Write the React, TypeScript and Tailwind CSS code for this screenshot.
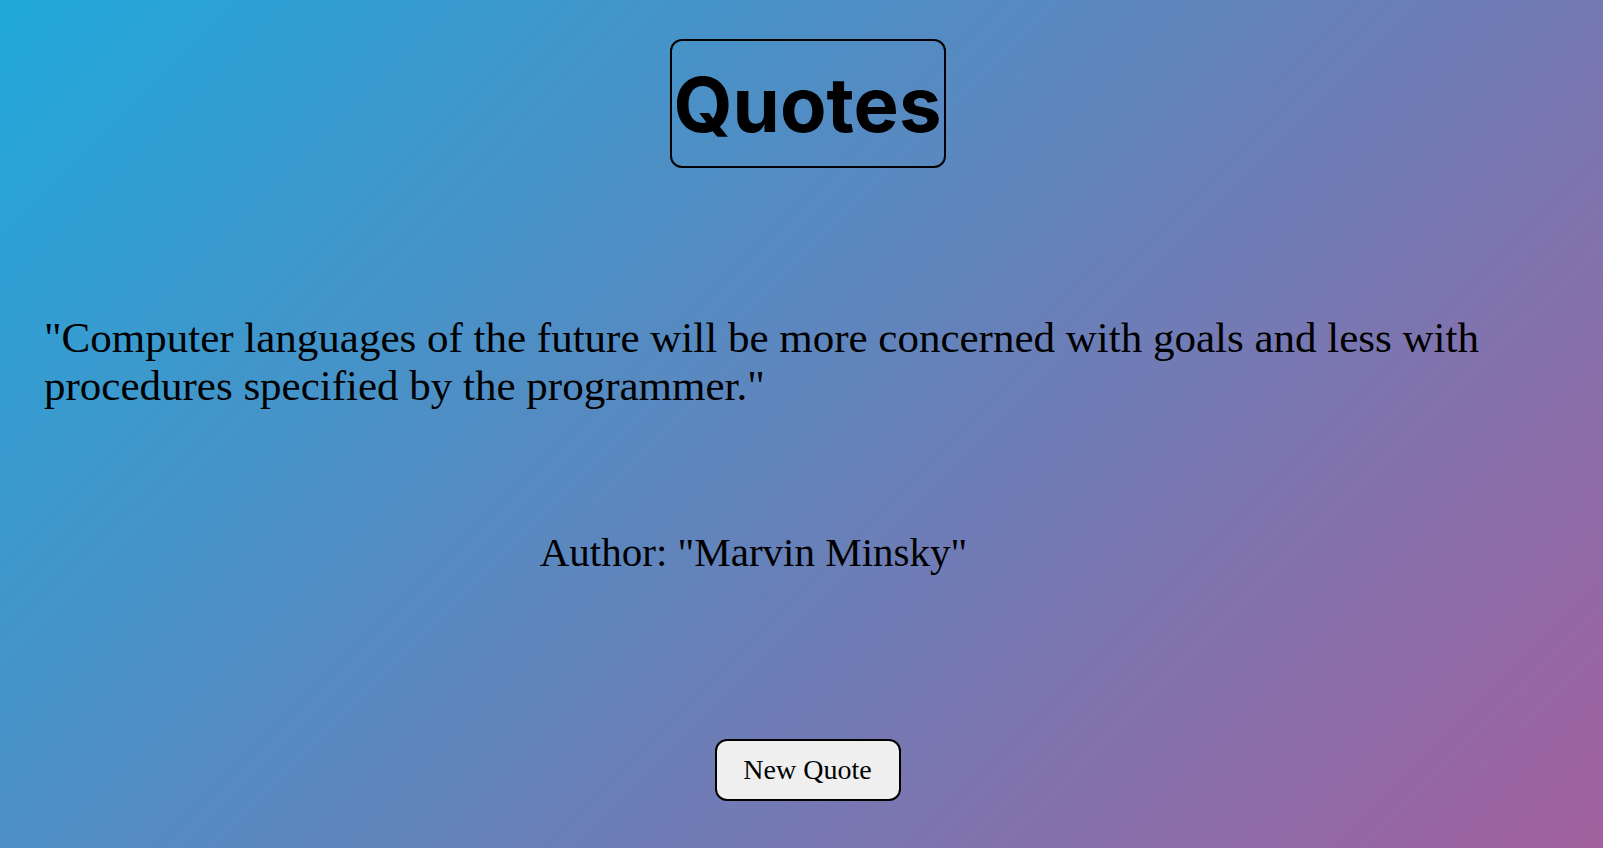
export default function App() {
  return (
    <div className="min-h-screen w-full bg-[linear-gradient(135deg,#20a8da,#a2609e)] text-black flex flex-col font-['Liberation_Serif','DejaVu_Serif',serif]">
      {/* Titre */}
      <div className="flex justify-center pt-[39px] pl-[12px]">
        <h1 className="w-[276px] h-[129px] flex items-center justify-center border-2 border-black rounded-[12px] text-[76px] font-bold font-['Inter','Open_Sans',sans-serif]">
          Quotes
        </h1>
      </div>

      {/* Citation */}
      <div className="px-[44px] mt-[146px] text-[43px] leading-[48px]">
        <p>
          "Computer languages of the future will be more concerned with goals and less with procedures specified by the programmer."
        </p>
      </div>

      <div className="mt-[118px] text-[41px] leading-[48px] text-center pr-[96px]">
        Author: "Marvin Minsky"
      </div>

      {/* Bouton */}
      <div className="flex justify-center mt-[163px] pl-[12px]">
        <button className="w-[186px] h-[62px] bg-[#efefef] border-2 border-black rounded-[12px] text-[28px]">
          New Quote
        </button>
      </div>
    </div>
  );
}
